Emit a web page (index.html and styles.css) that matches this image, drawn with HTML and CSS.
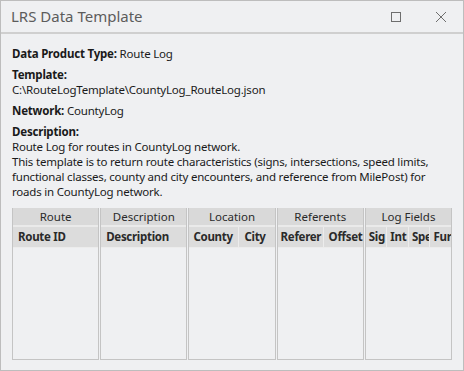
FILE: index.html
```html
<!DOCTYPE html>
<html>
<head>
<meta charset="utf-8">
<link rel="stylesheet" href="styles.css">
</head>
<body>
<div class="window">
  <div class="titlebar">
    <div class="title">LRS Data Template</div>
    <div class="controls">
      <svg class="ctl" width="12" height="12" viewBox="0 0 12 12"><rect x="1.5" y="1.5" width="9" height="9" fill="none" stroke="#6e6e6e" stroke-width="1"/></svg>
      <svg class="ctl close" width="12" height="12" viewBox="0 0 12 12"><path d="M1 1 L11 11 M11 1 L1 11" stroke="#6e6e6e" stroke-width="1" fill="none"/></svg>
    </div>
  </div>
  <div class="content">
    <div class="field"><b>Data Product Type:</b> Route Log</div>
    <div class="field"><b>Template:</b><br>C:\RouteLogTemplate\CountyLog_RouteLog.json</div>
    <div class="field"><b>Network:</b> CountyLog</div>
    <div class="field last"><b>Description:</b><br>Route Log for routes in CountyLog network.<br>This template is to return route characteristics (signs, intersections, speed limits, functional classes, county and city encounters, and reference from MilePost) for roads in CountyLog network.</div>
    <div class="table">
      <div class="group first">
        <div class="ghead">Route</div>
        <div class="subs"><div class="sub">Route ID</div></div>
        <div class="gbody"></div>
      </div>
      <div class="group">
        <div class="ghead">Description</div>
        <div class="subs"><div class="sub">Description</div></div>
        <div class="gbody"></div>
      </div>
      <div class="group">
        <div class="ghead">Location</div>
        <div class="subs"><div class="sub w-county">County</div><div class="sub">City</div></div>
        <div class="gbody"></div>
      </div>
      <div class="group">
        <div class="ghead">Referents</div>
        <div class="subs"><div class="sub w-ref">Referer</div><div class="sub">Offset</div></div>
        <div class="gbody"></div>
      </div>
      <div class="group">
        <div class="ghead">Log Fields</div>
        <div class="subs"><div class="sub w-log">Sig</div><div class="sub w-log">Int</div><div class="sub w-log">Spe</div><div class="sub w-log">Fur</div></div>
        <div class="gbody"></div>
      </div>
    </div>
  </div>
</div>
</body>
</html>
```
FILE: styles.css
```css
html, body {
  margin: 0;
  padding: 0;
  background: #eff0f2;
}
.window {
  width: 462px;
  height: 369px;
  border: 1px solid #bdbdbd;
  background: #eff0f2;
  display: flex;
  flex-direction: column;
  font-family: "Noto Sans", "Open Sans", sans-serif;
  color: #1a1a1a;
}
.titlebar {
  height: 31px;
  border-bottom: 2px solid #cfcfcf;
  display: flex;
  align-items: center;
  justify-content: space-between;
  padding: 0 0 0 10px;
}
.title {
  font-size: 15px;
  color: #5c5c5c;
  padding-bottom: 1px;
}
.controls {
  display: flex;
  align-items: center;
  gap: 33px;
  padding-right: 16px;
}
.ctl { display: block; }
.content {
  padding: 12px 10px 0 11px;
  font-size: 11.5px;
  line-height: 15px;
  letter-spacing: -0.2px;
  flex: 1;
  display: flex;
  flex-direction: column;
}
.field {
  margin-bottom: 6px;
}
.field b { font-weight: 700; }
.field.last { margin-bottom: 9px; }
.table {
  display: flex;
  width: 440px;
  flex: 1;
  margin-bottom: 10px;
  letter-spacing: 0;
}
.group {
  flex: 1 1 0;
  min-width: 0;
  display: flex;
  flex-direction: column;
  border-right: 1px solid #c4c4c4;
  border-left: 1px solid #c4c4c4;
  border-bottom: 1px solid #c4c4c4;
  margin-left: 1px;
}
.group.first { margin-left: 0; }
.ghead {
  background: #d9d9d9;
  text-align: center;
  height: 17px;
  line-height: 17px;
  color: #2a2a2a;
  border-bottom: 2px solid #eaeaea;
}
.subs {
  display: flex;
  background: #dcdcdc;
  height: 20px;
  border-bottom: 1px solid #ececec;
}
.sub {
  font-weight: 700;
  line-height: 20px;
  padding-left: 5px;
  overflow: hidden;
  white-space: nowrap;
  flex: 1 1 0;
  min-width: 0;
  border-right: 1px solid #ececec;
  color: #2a2a2a;
  letter-spacing: -0.3px;
}
.sub:last-child { border-right: none; }
.sub.w-county { flex: 0 0 45px; padding-left: 4px; }
.sub.w-ref { flex: 0 0 42px; padding-left: 3px; }
.sub.w-log { padding-left: 3px; }
.gbody { flex: 1; }
```
